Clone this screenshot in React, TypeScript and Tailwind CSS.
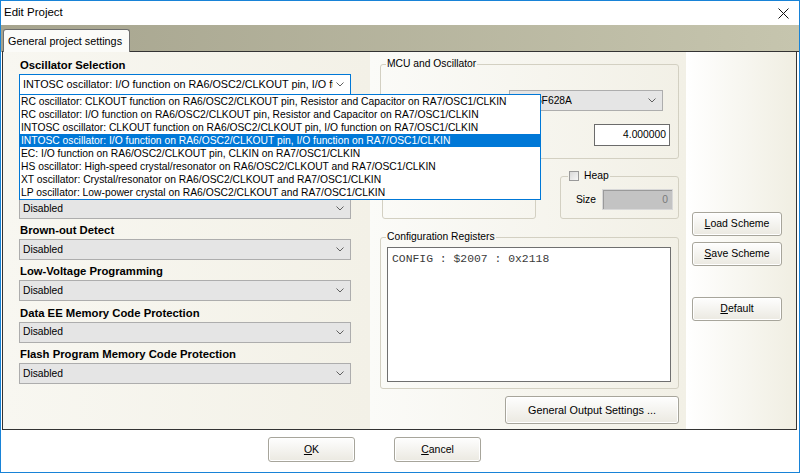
import React from "react";

const oscillatorOptions = [
  "RC oscillator: CLKOUT function on RA6/OSC2/CLKOUT pin, Resistor and Capacitor on RA7/OSC1/CLKIN",
  "RC oscillator: I/O function on RA6/OSC2/CLKOUT pin, Resistor and Capacitor on RA7/OSC1/CLKIN",
  "INTOSC oscillator: CLKOUT function on RA6/OSC2/CLKOUT pin, I/O function on RA7/OSC1/CLKIN",
  "INTOSC oscillator: I/O function on RA6/OSC2/CLKOUT pin, I/O function on RA7/OSC1/CLKIN",
  "EC: I/O function on RA6/OSC2/CLKOUT pin, CLKIN on RA7/OSC1/CLKIN",
  "HS oscillator: High-speed crystal/resonator on RA6/OSC2/CLKOUT and RA7/OSC1/CLKIN",
  "XT oscillator: Crystal/resonator on RA6/OSC2/CLKOUT and RA7/OSC1/CLKIN",
  "LP oscillator: Low-power crystal on RA6/OSC2/CLKOUT and RA7/OSC1/CLKIN",
];

// rows 1-3 (and the label of row 3) sit under the open drop-down list
const configSettings = [
  { label: "Oscillator Selection", value: oscillatorOptions[3], covered: 0 },
  { label: "Watchdog Timer", value: "Disabled", covered: 2 },
  { label: "Power-up Timer", value: "Disabled", covered: 2 },
  { label: "RA5/MCLR Pin Function", value: "Disabled", covered: 1 },
  { label: "Brown-out Detect", value: "Disabled", covered: 0 },
  { label: "Low-Voltage Programming", value: "Disabled", covered: 0 },
  { label: "Data EE Memory Code Protection", value: "Disabled", covered: 0 },
  { label: "Flash Program Memory Code Protection", value: "Disabled", covered: 0 },
];

function Chevron() {
  return (
    <svg width="8" height="5" viewBox="0 0 8 5" className="shrink-0">
      <path d="M0.5 0.5L4 4L7.5 0.5" fill="none" stroke="#606060" strokeWidth="1" />
    </svg>
  );
}

function Combo({ value, focused = false }: { value: string; focused?: boolean }) {
  return (
    <div
      className={`flex h-[21px] items-center border pl-[3px] pr-[6px] ${
        focused ? "border-[#0078d7] bg-white text-[10.8px]" : "border-[#adadad] bg-[#e5e5e5] text-[10.3px]"
      }`}
    >
      <span className="flex-1 overflow-hidden whitespace-nowrap">{value}</span>
      <span className="ml-[3px]">
        <Chevron />
      </span>
    </div>
  );
}

function Btn({ children, className = "" }: { children: React.ReactNode; className?: string }) {
  return (
    <div
      className={`flex items-center justify-center rounded-[3px] border border-[#a7a59b] bg-linear-to-b from-[#fefefe] to-[#ebe9e1] text-[10.5px] shadow-[inset_0_0_0_1px_#ffffff] ${className}`}
    >
      {children}
    </div>
  );
}

function OscillatorList() {
  return (
    <div className="absolute left-0 top-[38px] z-20 w-[522px] border border-[#0078d7] bg-white text-[10.3px]">
      {oscillatorOptions.map((opt, i) => (
        <div
          key={opt}
          className={`h-[13px] whitespace-nowrap pl-[1px] leading-[13px] ${
            i === 3 ? "bg-[#0078d7] text-white" : "text-black"
          }`}
        >
          {opt}
        </div>
      ))}
    </div>
  );
}

export default function App() {
  return (
    <div className="flex h-[473px] w-[800px] flex-col overflow-hidden border border-[#1883d7] bg-white font-['Liberation_Sans',Arial,sans-serif] text-black">
      {/* title bar */}
      <div className="flex h-[24px] shrink-0 items-center justify-between pl-[3px] pr-[10px]">
        <span className="text-[11.5px]">Edit Project</span>
        <svg width="11" height="11" viewBox="0 0 11 11">
          <path d="M0.5 0.5L10.5 10.5M10.5 0.5L0.5 10.5" stroke="#111" strokeWidth="1" />
        </svg>
      </div>

      {/* tab strip */}
      <div className="flex h-[27px] shrink-0 items-end bg-linear-to-r from-[#a6a48e] to-[#c6c5ae] pl-[1px]">
        <div className="h-full w-[1px] border-b border-[#333]" />
        <div className="flex h-[23px] w-[127px] items-center rounded-t-[3px] border-x border-t border-[#6e6e6e] bg-[#fbfbf8] pl-[4px] text-[10.8px]">
          General project settings
        </div>
        <div className="h-full flex-1 border-b border-[#333]" />
      </div>

      {/* tab panel */}
      <div className="ml-[1px] mr-[2px] flex h-[378px] shrink-0 border-x border-b border-[#333]">
        {/* left: config bits */}
        <div className="relative w-[367px] shrink-0 bg-linear-to-r from-[#f8f7f1] to-[#f3f1e7] pl-[16px] pt-[4px]">
          {configSettings.map((s, i) => (
            <div key={s.label} className="relative mb-[2.25px] w-[332px]">
              <div
                className={`h-[18px] pl-[1px] text-[11.3px] font-bold leading-[18px] ${
                  s.covered > 0 ? "invisible" : ""
                }`}
              >
                {s.label}
              </div>
              <div className={s.covered > 1 ? "invisible" : ""}>
                <Combo value={s.value} focused={i === 0} />
              </div>
              {i === 0 && <OscillatorList />}
            </div>
          ))}
        </div>

        {/* middle: mcu, heap, registers */}
        <div className="flex w-[316px] shrink-0 flex-col bg-linear-to-r from-[#fbfbf8] to-[#f2f0e6] pl-[10px] pr-[7px] text-[10.3px]">
          <fieldset className="mt-[6px] h-[101px] rounded-[3px] border border-[#d3d0c2] px-0">
            <legend className="ml-[5px] px-[1px] leading-[12px]">MCU and Oscillator</legend>
            <div className="mt-[20px] flex items-center justify-end pr-[15px]">
              <div className="w-[154px]">
                <Combo value="PIC16F628A" />
              </div>
            </div>
            <div className="mt-[13px] flex items-center justify-end pr-[8px]">
              <div className="flex h-[22px] w-[76px] items-center justify-end border border-[#6b6b6b] bg-white pr-[3px]">
                4.000000
              </div>
            </div>
          </fieldset>

          <div className="mt-[11px] flex">
            <fieldset className="ml-[2px] h-[49px] w-[154px] rounded-[3px] border border-[#d3d0c2]" />
            <fieldset className="ml-[24px] h-[49px] w-[119px] rounded-[3px] border border-[#d3d0c2]">
              <legend className="ml-[7px] flex items-center px-[1px] leading-[12px]">
                <span className="mr-[5px] h-[10px] w-[10px] border border-[#9a9a9a] bg-linear-to-br from-[#d9d9d9] to-[#f7f7f7]" />
                Heap
              </legend>
              <div className="mt-[7px] flex items-center justify-end pr-[5px]">
                <span className="mr-[6px]">Size</span>
                <div className="flex h-[21px] w-[71px] items-center justify-end border border-[#d8d8d8] bg-[#c3c3c3] pr-[4px] text-[#7a7a7a] shadow-[inset_1px_1px_0_#9a9a9a]">
                  0
                </div>
              </div>
            </fieldset>
          </div>

          <fieldset className="mt-[12px] h-[158px] rounded-[3px] border border-[#d3d0c2]">
            <legend className="ml-[5px] px-[1px] leading-[12px]">Configuration Registers</legend>
            <div className="ml-[6px] mt-[4px] h-[135px] w-[284px] border border-[#6f6f6f] bg-white pl-[4px] pt-[4px] font-['Liberation_Mono',monospace] text-[11.4px] leading-[14px] text-[#3b3b3b]">
              CONFIG : $2007 : 0x2118
            </div>
          </fieldset>

          <div className="mt-[7px] flex justify-end">
            <Btn className="h-[28px] w-[174px] text-[10.8px]">General Output Settings ...</Btn>
          </div>
        </div>

        {/* right: schemes */}
        <div className="flex flex-1 flex-col bg-linear-to-r from-white to-[#f0eee2] pl-[6px] pt-[160px]">
          <Btn className="h-[24px] w-[90px]">
            <span className="underline">L</span>oad Scheme
          </Btn>
          <Btn className="mt-[6px] h-[24px] w-[90px]">
            <span className="underline">S</span>ave Scheme
          </Btn>
          <Btn className="mt-[31px] h-[24px] w-[90px]">
            <span className="underline">D</span>efault
          </Btn>
        </div>
      </div>

      {/* dialog buttons */}
      <div className="flex flex-1 items-start gap-[39px] bg-white pl-[267px] pt-[7px]">
        <Btn className="h-[25px] w-[87px]">
          <span className="underline">O</span>K
        </Btn>
        <Btn className="h-[25px] w-[87px]">
          <span className="underline">C</span>ancel
        </Btn>
      </div>
    </div>
  );
}
